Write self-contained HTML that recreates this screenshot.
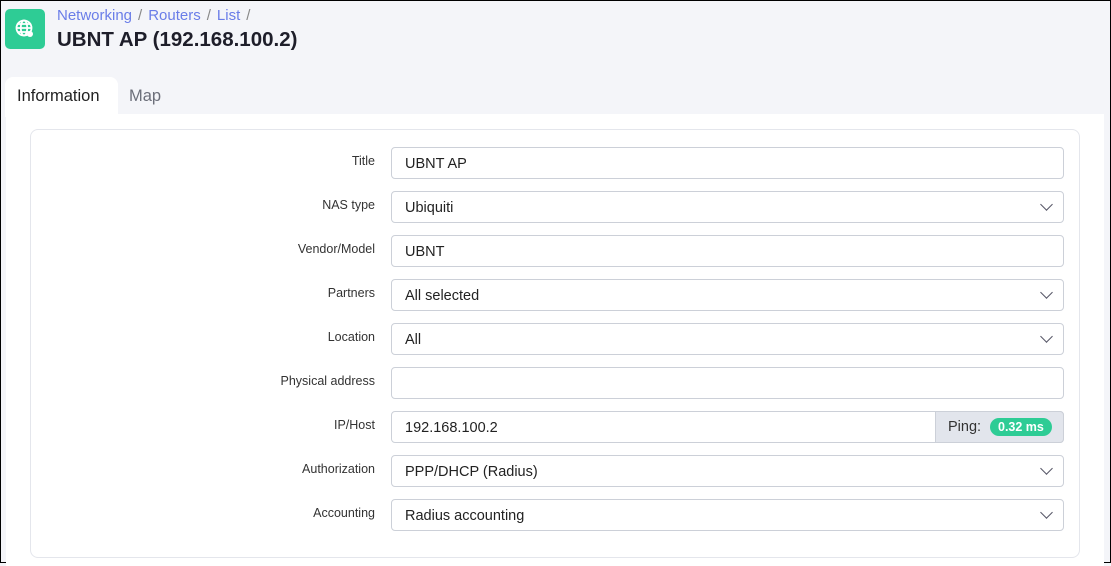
<!DOCTYPE html>
<html><head><style>
*{box-sizing:border-box;margin:0;padding:0}
body{width:1111px;height:563px;overflow:hidden;background:#f4f5f9;font-family:"Liberation Sans",sans-serif;position:relative;border:1px solid #000}
.w{position:absolute;left:-1px;top:-1px;width:1111px;height:563px}
.icon{position:absolute;left:5px;top:9px;width:40px;height:40px;border-radius:5px;background:#2ecc95}
.bc{position:absolute;left:57px;top:7px;font-size:15px;color:#6a7de8}
.bc span{color:#888;margin:0 6px}
h1{position:absolute;left:57px;top:28px;font-size:20.5px;font-weight:bold;color:#1e1e2a}
.tab{position:absolute;top:77px;height:40px;font-size:16.5px;padding:10px 12px}
.t1{left:5px;background:#fff;border-radius:8px 8px 0 0;color:#222;width:113px}
.t2{left:117px;color:#6c6f7a}
.panel{position:absolute;left:6px;top:114px;width:1098px;height:452px;background:#fff}
.card{position:absolute;left:24px;top:15px;width:1050px;height:429px;border:1px solid #e4e6ec;border-radius:8px}
.row{position:absolute;left:0;width:100%}
.lbl{position:absolute;right:704px;top:7px;font-size:12.5px;color:#333;text-align:right;white-space:nowrap}
.inp{position:absolute;left:360px;width:673px;height:32px;border:1px solid #ccd0d8;border-radius:4px;font-size:14.5px;color:#222;padding:8px 13px}
.chev{position:absolute;right:12px;top:8px;width:9px;height:9px;border-right:1.5px solid #556;border-bottom:1.5px solid #556;transform:rotate(45deg)}
.ping{position:absolute;right:-1px;top:-1px;width:129px;height:32px;background:#e2e5ec;border:1px solid #ccd0d8;border-radius:0 4px 4px 0;font-size:14.5px;padding:7px 12px;color:#333}
.badge{position:absolute;left:54px;top:6px;background:#2ecc95;color:#fff;font-weight:bold;font-size:12.5px;border-radius:10px;padding:2px 8px}
</style></head><body><div class="w">
<div class="icon"><svg width="40" height="40" viewBox="0 0 40 40"><g fill="none" stroke="#fff" stroke-width="1.8"><circle cx="19" cy="19" r="7.5"/><ellipse cx="19" cy="19" rx="3.2" ry="7.5"/><path d="M11.5 19h15M13 15h12M13 23h12"/></g><circle cx="25" cy="25" r="3" fill="#fff"/></svg></div>
<div class="bc">Networking<span>/</span>Routers<span>/</span>List<span>/</span></div>
<h1>UBNT AP (192.168.100.2)</h1>
<div class="tab t1">Information</div>
<div class="tab t2">Map</div>
<div class="panel"><div class="card">
<div class="row" style="top:17px"><div class="lbl">Title</div><div class="inp">UBNT AP</div></div>
<div class="row" style="top:61px"><div class="lbl">NAS type</div><div class="inp">Ubiquiti<div class="chev"></div></div></div>
<div class="row" style="top:105px"><div class="lbl">Vendor/Model</div><div class="inp">UBNT</div></div>
<div class="row" style="top:149px"><div class="lbl">Partners</div><div class="inp">All selected<div class="chev"></div></div></div>
<div class="row" style="top:193px"><div class="lbl">Location</div><div class="inp">All<div class="chev"></div></div></div>
<div class="row" style="top:237px"><div class="lbl">Physical address</div><div class="inp"></div></div>
<div class="row" style="top:281px"><div class="lbl">IP/Host</div><div class="inp">192.168.100.2<div class="ping">Ping:<span class="badge">0.32 ms</span></div></div></div>
<div class="row" style="top:325px"><div class="lbl">Authorization</div><div class="inp">PPP/DHCP (Radius)<div class="chev"></div></div></div>
<div class="row" style="top:369px"><div class="lbl">Accounting</div><div class="inp">Radius accounting<div class="chev"></div></div></div>
</div></div>
</div></body></html>
